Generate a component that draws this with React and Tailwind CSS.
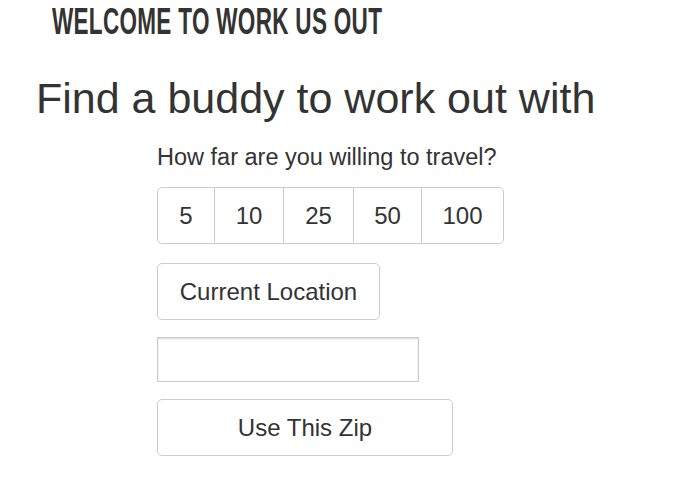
import React, { useState } from 'react';

const distances = ['5', '10', '25', '50', '100'];

const App = () => {
  const [zip, setZip] = useState('');

  return (
    <div className="min-h-screen bg-white text-[#333] font-['Liberation_Sans',Arial,sans-serif]">
      <div className="pl-[52px] pt-[3px]">
        <h1 className="inline-block origin-left scale-x-[0.625] text-[36px] leading-[38px] font-bold uppercase tracking-[0.5px] whitespace-nowrap">
          Welcome to Work Us Out
        </h1>
      </div>

      <h2 className="mt-[33px] pl-[36px] text-[43px] leading-[48px] whitespace-nowrap">
        Find a buddy to work out with
      </h2>

      <div className="pl-[157px] mt-[21px]">
        <p className="text-[23.5px] leading-[28px]">How far are you willing to travel?</p>

        <div className="mt-[16px] inline-flex h-[57px] rounded-[5px] border border-[#ccc] overflow-hidden">
          {distances.map((d, i) => (
            <button
              key={d}
              className={
                'h-full text-[24px] ' +
                (i > 0 ? 'border-l border-[#ccc] ' : '') +
                (d === '5' ? 'w-[56px]' : d === '10' ? 'w-[69px]' : d === '25' ? 'w-[70px]' : d === '50' ? 'w-[68px]' : 'w-[82px]')
              }
            >
              {d}
            </button>
          ))}
        </div>

        <div className="mt-[19px]">
          <button className="h-[57px] w-[223px] rounded-[5px] border border-[#ccc] text-[24px]">
            Current Location
          </button>
        </div>

        <div className="mt-[17px]">
          <input
            type="text"
            value={zip}
            onChange={(e) => setZip(e.target.value)}
            className="block h-[45px] w-[262px] border border-[#ccc] shadow-[inset_0_1px_2px_rgba(0,0,0,0.15)] outline-none px-2 text-[18px]"
          />
        </div>

        <div className="mt-[17px]">
          <button className="h-[57px] w-[296px] rounded-[5px] border border-[#ccc] text-[24px]">
            Use This Zip
          </button>
        </div>
      </div>
    </div>
  );
};

export default App;
